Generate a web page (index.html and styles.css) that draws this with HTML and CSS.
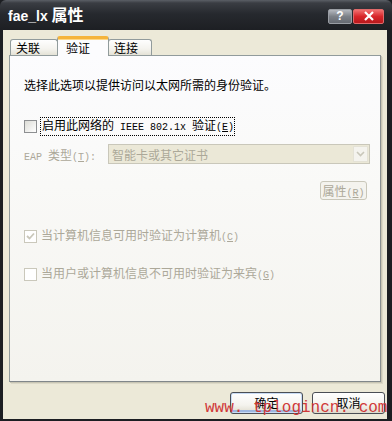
FILE: index.html
```html
<!DOCTYPE html>
<html lang="zh-CN">
<head>
<meta charset="utf-8">
<title>fae_lx 属性</title>
<link rel="stylesheet" href="styles.css">
</head>
<body>
<div class="window">
  <div class="titlebar">
    <div class="title">fae_lx <span class="title-cjk">属性</span></div>
    <div class="tb-buttons">
      <div class="tb-btn help">?</div>
      <div class="tb-btn close">
        <svg width="12" height="10" viewBox="0 0 12 10"><path d="M2 1 L10 9 M10 1 L2 9" stroke="#fff" stroke-width="2.2" fill="none"/></svg>
      </div>
    </div>
  </div>
  <div class="client">
    <div class="tabs">
      <div class="tab t1">关联</div>
      <div class="tab active t2">验证</div>
      <div class="tab t3">连接</div>
    </div>
    <div class="panel">
      <div class="desc">选择此选项以提供访问以太网所需的身份验证。</div>
      <div class="chk-row r1">
        <span class="chk"></span>
        <span class="focus">启用此网络的<span class="lat"> IEEE 802.1x </span>验证<span class="lat">(<u>E</u>)</span></span>
      </div>
      <div class="eap-row">
        <span class="eap-label dis"><span class="lat">EAP </span>类型<span class="lat">(<u>T</u>):</span></span>
        <div class="select">
          <span class="sel-text">智能卡或其它证书</span>
          <span class="sel-btn">
            <svg width="9" height="6" viewBox="0 0 9 6"><path d="M1 1 L4.5 4.5 L8 1" stroke="#c9c7ba" stroke-width="1.6" fill="none"/></svg>
          </span>
        </div>
      </div>
      <div class="prop-row">
        <div class="btn-prop dis">属性<span class="lat">(<u>R</u>)</span></div>
      </div>
      <div class="chk-row r2 dis">
        <span class="chk dis-chk checked">
          <svg width="9" height="9" viewBox="0 0 9 9"><path d="M1 4 L3.5 6.5 L8 1.5" stroke="#c9c7ba" stroke-width="1.8" fill="none"/></svg>
        </span>
        <span>当计算机信息可用时验证为计算机<span class="lat">(<u>C</u>)</span></span>
      </div>
      <div class="chk-row r3 dis">
        <span class="chk dis-chk"></span>
        <span>当用户或计算机信息不可用时验证为来宾<span class="lat">(<u>G</u>)</span></span>
      </div>
    </div>
    <div class="footer">
      <div class="btn default">确定</div>
      <div class="btn">取消</div>
    </div>
    <div class="watermark">www. tplogincn. com</div>
  </div>
</div>
</body>
</html>
```
FILE: styles.css
```css
html, body {
  margin: 0;
  padding: 0;
  background: #1c1e22;
}
.window {
  width: 392px;
  height: 421px;
  display: flex;
  flex-direction: column;
  background: #1c1e22;
  font-family: "Noto Sans CJK SC", "Liberation Sans", sans-serif;
  font-size: 12px;
  color: #000;
  overflow: hidden;
}
.titlebar {
  height: 30px;
  flex: none;
  display: flex;
  align-items: center;
  justify-content: space-between;
  padding: 0 8px 0 8px;
  background: linear-gradient(#5b5f66 0px, #3a3d43 3px, #26292e 14px, #1d1f23 30px);
  border-radius: 6px 6px 0 0;
}
.title {
  color: #fff;
  font-family: "Liberation Sans", "Noto Sans CJK SC", sans-serif;
  font-weight: bold;
  font-size: 14px;
  line-height: 30px;
}
.title-cjk {
  font-family: "Noto Sans CJK SC", sans-serif;
  font-size: 16px;
}
.tb-buttons {
  display: flex;
  gap: 1px;
  margin-top: 2px;
}
.tb-btn {
  height: 15px;
  display: flex;
  align-items: center;
  justify-content: center;
  border-radius: 2px;
  color: #fff;
  font-family: "Liberation Sans", sans-serif;
  font-weight: bold;
  font-size: 12px;
}
.help {
  width: 24px;
  background: linear-gradient(#b4b8be, #7c8188 50%, #666a71);
  border: 1px solid #9a9ea4;
  box-sizing: border-box;
}
.close {
  width: 31px;
  background: linear-gradient(#f07070, #d8262a 50%, #b8181c);
  border: 1px solid #e06a6a;
  box-sizing: border-box;
}
.client {
  flex: 1;
  position: relative;
  margin: 0 5px 2px 3px;
  background: #ece9d8;
  display: flex;
  flex-direction: column;
}
.tabs {
  display: flex;
  align-items: flex-end;
  height: 25px;
  padding-left: 7px;
  position: relative;
  z-index: 2;
}
.tab {
  height: 16px;
  box-sizing: border-box;
  border: 1px solid #919b9c;
  border-bottom: none;
  border-radius: 3px 3px 0 0;
  background: linear-gradient(#fefefe, #f4f3ee 60%, #e4e2d6);
  line-height: 16px;
  padding-left: 5px;
  font-size: 12px;
}
.t1 { width: 48px; }
.t3 { width: 44px; margin-left: -1px; }
.t2 { margin-left: -1px; }
.tab.active {
  width: 52px;
  height: 20px;
  background: #fcfcfe;
  border-top: 3px solid #f5b43c;
  line-height: 17px;
  padding-left: 8px;
  margin-bottom: -1px;
  box-shadow: inset 0 1px 0 #ffd886;
}
.panel {
  margin: 0 6px 0 6px;
  height: 327px;
  box-sizing: border-box;
  border: 1px solid #919b9c;
  border-right-color: #8a9091;
  border-bottom-color: #80868a;
  box-shadow: 1px 1px 0 #c8c5b4, 2px 2px 0 #dcd9c8;
  background: linear-gradient(#fcfcfe 0%, #f9f9f7 40%, #f4f3ee 100%);
  padding: 0 13px 0 14px;
}
.desc {
  margin-top: 21px;
  height: 16px;
  line-height: 16px;
}
.lat {
  font-family: "Liberation Mono", monospace;
  font-size: 10px;
}
.dis {
  color: #aca899;
}
.chk-row {
  display: flex;
  align-items: center;
  height: 16px;
  line-height: 16px;
}
.r1 { margin-top: 25px; }
.r2 { margin-top: 28px; }
.r3 { margin-top: 22px; }
.chk {
  width: 13px;
  height: 13px;
  box-sizing: border-box;
  border: 1px solid #8d8f91;
  background: linear-gradient(135deg, #dcdcd6, #ffffff);
  margin-right: 4px;
  display: flex;
  align-items: center;
  justify-content: center;
  flex: none;
}
.chk.dis-chk {
  border-color: #cac8bb;
  background: #fff;
}
.focus {
  outline: 1px dotted #000;
  outline-offset: 0;
  padding: 0 0 0 1px;
  line-height: 14px;
}
.eap-row {
  display: flex;
  align-items: center;
  margin-top: 10px;
  height: 20px;
}
.eap-label {
  width: 84px;
  flex: none;
}
.select {
  flex: 1;
  height: 20px;
  box-sizing: border-box;
  border: 1px solid #c9c7ba;
  background: #ebe8d7;
  display: flex;
  align-items: center;
  justify-content: space-between;
  padding: 0 1px 0 3px;
  margin-right: -3px;
}
.sel-text {
  color: #aca899;
}
.sel-btn {
  width: 15px;
  height: 16px;
  box-sizing: border-box;
  border: 1px solid #e4e2d6;
  background: #f4f3ee;
  display: flex;
  align-items: center;
  justify-content: center;
}
.prop-row {
  display: flex;
  justify-content: flex-end;
  margin-top: 17px;
}
.btn-prop {
  width: 47px;
  height: 19px;
  box-sizing: border-box;
  border: 1px solid #c9c7ba;
  border-radius: 3px;
  background: #f4f3ee;
  line-height: 17px;
  text-align: center;
}
.footer {
  display: flex;
  justify-content: flex-end;
  gap: 9px;
  margin-top: 10px;
  padding-right: 2px;
}
.btn {
  width: 73px;
  height: 22px;
  box-sizing: border-box;
  border: 1px solid #4a4e55;
  border-radius: 3px;
  background: linear-gradient(#ffffff, #f4f3ee 60%, #dedbcc);
  text-align: center;
  line-height: 20px;
  font-size: 12px;
}
.btn.default {
  box-shadow: inset 0 0 0 1px #c9dcf5, inset 0 -2px 0 1px #9db6e0;
}
.watermark {
  position: absolute;
  left: 202px;
  top: 368px;
  font-family: "Liberation Mono", monospace;
  font-size: 16px;
  line-height: 20px;
  color: #d03838;
  white-space: pre;
}
```
